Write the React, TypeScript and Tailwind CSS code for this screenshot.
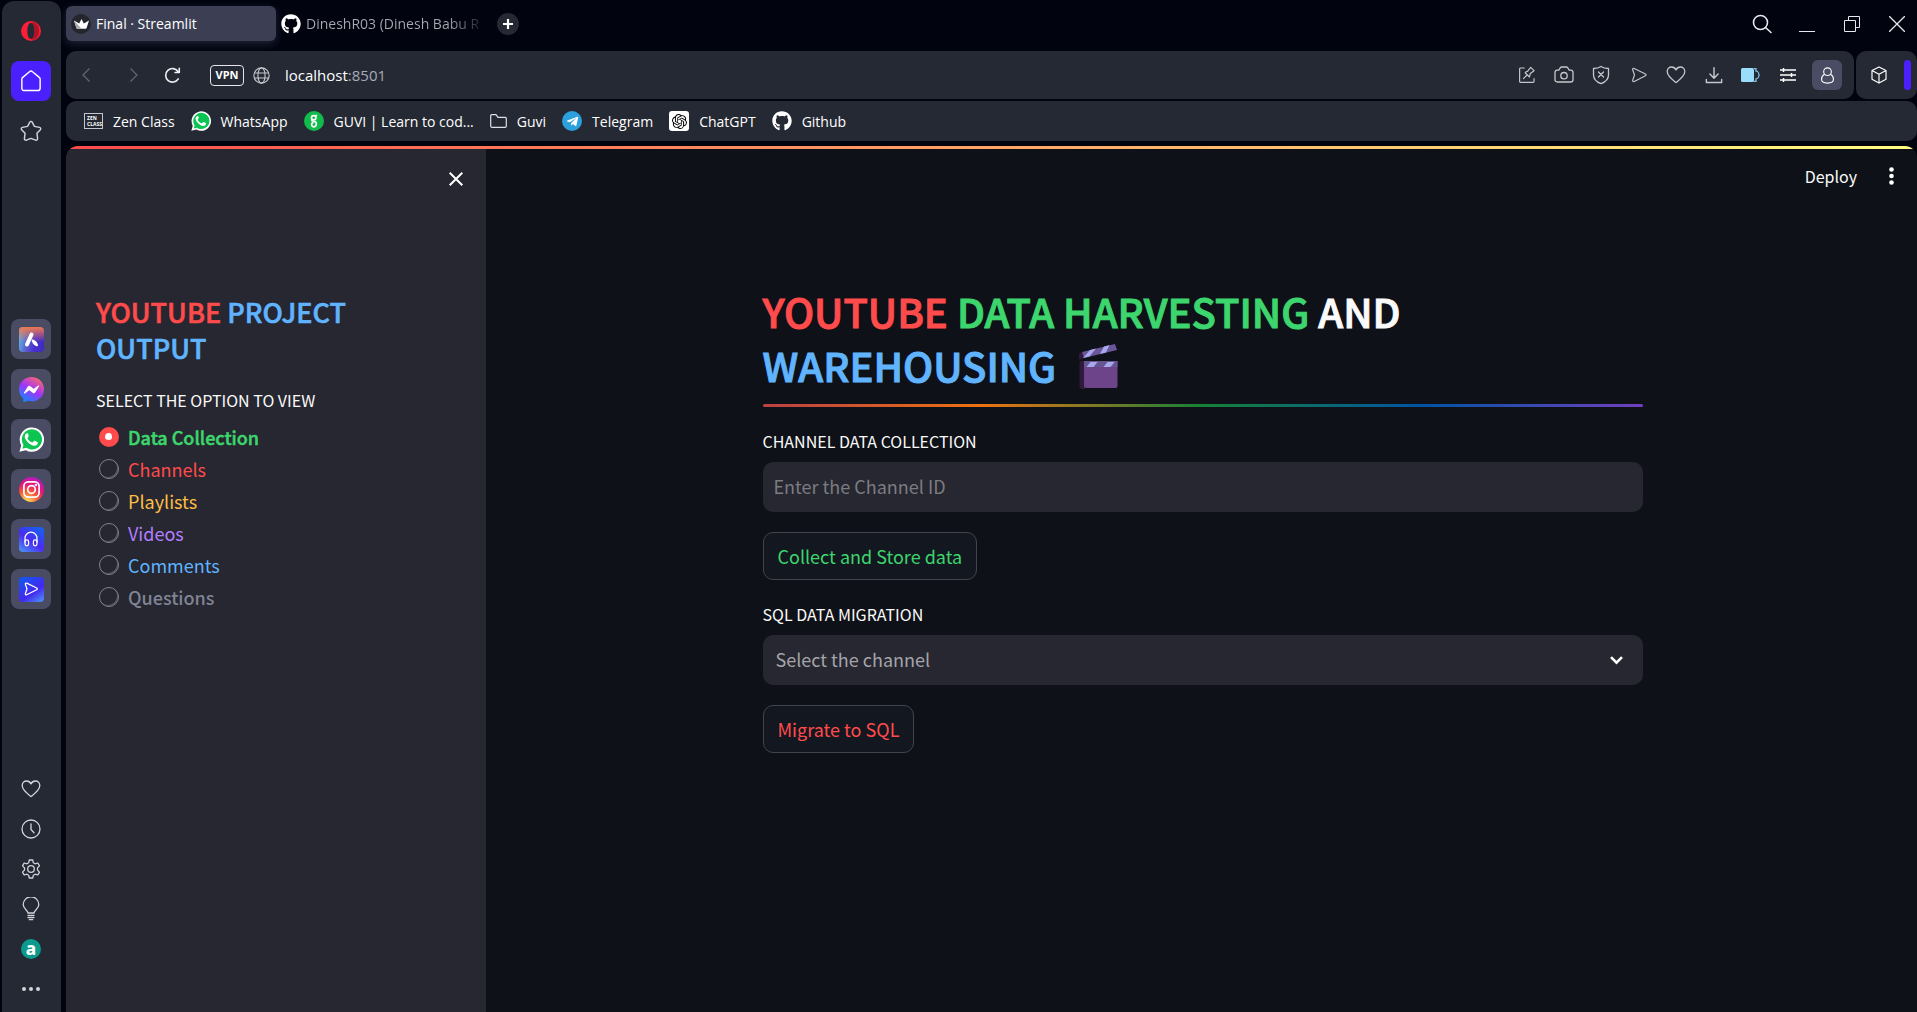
import { useState, type ReactNode } from "react";
import { FaGithub, FaTelegramPlane } from "react-icons/fa";
import { SiOpenai } from "react-icons/si";
import { BsMessenger } from "react-icons/bs";

function Line({ size = 20, width = 1.3, children }: { size?: number; width?: number; children: ReactNode }) {
  return (
    <svg
      width={size}
      height={size}
      viewBox="0 0 20 20"
      fill="none"
      stroke="currentColor"
      strokeWidth={width}
      strokeLinecap="round"
      strokeLinejoin="round"
      aria-hidden="true"
    >
      {children}
    </svg>
  );
}

const heartPath = "M10 17.6C6 14.5 1.2 11 1.2 6.6 1.2 3.8 3.2 2 5.6 2 7.6 2 9.2 3.1 10 4.9 10.8 3.1 12.4 2 14.4 2c2.4 0 4.4 1.8 4.4 4.6 0 4.4-4.8 7.9-8.8 11z";
const sendPath = "M3 4.2c-.4-1.2.6-2 1.7-1.5l12.4 6.1c1 .5 1 1.6 0 2.1L4.7 17.2c-1.1.5-2.1-.3-1.7-1.5L5 10z";

function WhatsAppIcon({ size }: { size: number }) {
  return (
    <svg width={size} height={size} viewBox="0 0 24 24" aria-hidden="true">
      <path fill="#fff" d="M.4 23.8 2.1 17.700A11.700 11.700 0 1 1 6.500 22.200z" />
      <path fill="#0ac552" d="m3.300 20.900 1-3.700A9.700 9.700 0 1 1 7.100 20z" />
      <path
        fill="#fff"
        d="M8.900 6.500c-.3-.6-.5-.6-1-.6-.9 0-2.400 1-2.400 3.200 0 3.600 5.300 8.900 9.100 8.900 2.200 0 3.400-1.300 3.500-2.900 0-.5-.1-.6-.6-.8l-2.300-1.100c-.4-.2-.7-.1-.9.2l-1 1.200c-.2.300-.5.300-.9.100-1.900-.8-3.300-2.100-4.200-3.700-.2-.4-.1-.6.1-.8.300-.4.900-.9.900-1.400z"
      />
    </svg>
  );
}

function Clapper() {
  return (
    <svg className="ml-[23px] inline-block align-[-7px]" width="39" height="45" viewBox="0 0 39 45" role="img" aria-label="Clapper board">
      <path fill="#2f1a3c" d="M0 9.500 3 8l2 6-3 1.500H0z" />
      <path fill="#6a5699" d="M3 8 36 0l2 6L5 14z" />
      <path fill="#a9a8ee" d="M5 14 11.500 12.400 18 4.400 12 5.900zM22 9.900 28 8.400 31.500 1.100 26 2.400z" transform="translate(-1 0)" />
      <path fill="#2f1a3c" d="M1.500 17H6v28H3.500a3 3 0 0 1-3-3V18z" />
      <path fill="#6d448a" d="M5 17h33.500v25a2 2 0 0 1-2 2H7a2 2 0 0 1-2-2z" />
      <path fill="#675592" d="M5 17h33.500v6H5z" />
      <path fill="#a9a8ee" d="M11.500 18h7l-4 5h-7zM28.500 18h7l-4 5h-7z" />
    </svg>
  );
}

function RailButton({ label, children, className = "" }: { label: string; children: ReactNode; className?: string }) {
  return (
    <button aria-label={label} className={`flex size-10 items-center justify-center rounded-lg text-[#d3d4da] ${className}`}>
      {children}
    </button>
  );
}

function Rail() {
  return (
    <nav aria-label="Browser sidebar" className="flex w-[59px] shrink-0 flex-col items-center rounded-t-xl bg-[#252933] pt-[10px] pr-px pb-[3px]">
      <div className="flex flex-col gap-[10px]">
        <RailButton label="Opera menu">
          <svg width="20" height="20" viewBox="0 0 22 22" aria-hidden="true">
            <path fill="#fa1e36" fillRule="evenodd" d="M11 0a11 11 0 1 0 0 22 11 11 0 0 0 0-22zm0 2.200c2.600 0 4 3.800 4 8.800s-1.400 8.800-4 8.800S7 16 7 11s1.400-8.800 4-8.800z" />
            <path fill="#b01326" d="M11 2.200c1.200-1 3.600-1 5.500.6 2.300 2 3.400 5 3.400 8.200s-1.100 6.200-3.400 8.200c-1.900 1.600-4.300 1.600-5.500.6 2.600 0 4-3.800 4-8.800s-1.400-8.800-4-8.800z" />
          </svg>
        </RailButton>
        <RailButton label="Home" className="bg-[#4b20ff] text-white">
          <Line size={22}>
            <path d="M1.700 8.200c0-.6.3-1.100.8-1.500L8.600 1.600c.8-.7 2-.7 2.800 0l6.100 5.100c.5.400.8.900.8 1.500v8.300c0 1.300-.9 2.200-2.200 2.200H3.900c-1.300 0-2.200-.9-2.200-2.200z" />
          </Line>
        </RailButton>
        <RailButton label="Pinboards">
          <Line size={22}>
            <path d="M8.900 1.900c.4-.9 1.700-.9 2.200 0l2 3.900 4.700.9c1 .2 1.400 1.300.7 2.100L15.400 12l.6 5c.1 1-.9 1.700-1.800 1.300L10 16.700l-4.200 1.600c-.9.4-1.900-.3-1.800-1.300l.6-5-3.100-3.200c-.7-.8-.3-1.900.7-2.100l4.700-.9z" />
          </Line>
        </RailButton>
      </div>

      <div className="mt-[168px] flex flex-col gap-[10px]">
        <RailButton label="Aria" className="bg-[#4a4c63]">
          <span className="flex size-[25px] items-center justify-center rounded bg-[linear-gradient(100deg,#5ec4e8,#5a63cf_35%,#4a2fd0_65%,#3d2bbd)]">
            <svg width="25" height="25" viewBox="0 0 25 25" aria-hidden="true">
              <defs>
                <linearGradient id="ariaTop" x1="0" y1="0" x2="0" y2="1">
                  <stop offset="0" stopColor="#f0774e" />
                  <stop offset="0.6" stopColor="#f0774e" stopOpacity="0" />
                </linearGradient>
              </defs>
              <rect width="25" height="25" rx="4" fill="url(#ariaTop)" />
              <path stroke="#fff" strokeWidth="4" strokeLinecap="round" d="M12.500 7.500 8 17.500" />
              <path fill="#fff" d="M12.500 12.500c3.500 0 6 2.500 6.500 5.500.1 1-1 1.600-2 1-2.500-1.200-4.300-3.500-4.500-6.500z" />
            </svg>
          </span>
        </RailButton>
        <RailButton label="Messenger" className="bg-[#4a4c63]">
          <svg width="25" height="25" viewBox="0 0 16 16" aria-hidden="true">
            <defs>
              <linearGradient id="messengerFill" x1="0.8" y1="0" x2="0.2" y2="1">
                <stop offset="0" stopColor="#ff6968" />
                <stop offset="0.5" stopColor="#a334fa" />
                <stop offset="1" stopColor="#0a8cff" />
              </linearGradient>
            </defs>
            <ellipse cx="8" cy="7.800" rx="6" ry="5.500" fill="#fff" />
            <BsMessenger size={16} fill="url(#messengerFill)" />
          </svg>
        </RailButton>
        <RailButton label="WhatsApp" className="bg-[#4a4c63]">
          <WhatsAppIcon size={25} />
        </RailButton>
        <RailButton label="Instagram" className="bg-[#4a4c63]">
          <span className="flex size-[25px] items-center justify-center rounded-full bg-[radial-gradient(circle_at_30%_105%,#fdd05a_10%,#fb5a35_38%,#e6157c_62%,#9a1bf0_100%)] text-white">
            <Line size={19} width={1.800}>
              <rect x="2" y="2" width="16" height="16" rx="4.500" />
              <circle cx="10" cy="10" r="4" />
              <circle cx="14.700" cy="5.300" r="0.500" />
            </Line>
          </span>
        </RailButton>
        <RailButton label="Player" className="bg-[#4a4c63]">
          <span className="flex size-[25px] items-center justify-center rounded bg-[linear-gradient(35deg,#4a9df5,#4b2af0_45%,#0d6bf0)] text-white">
            <Line size={16} width={1.500}>
              <path d="M2.500 14V9a7.500 7.500 0 0 1 15 0v5" />
              <rect x="2.500" y="11" width="4.500" height="7.500" rx="2.200" />
              <rect x="13" y="11" width="4.500" height="7.500" rx="2.200" />
            </Line>
          </span>
        </RailButton>
        <RailButton label="Flow" className="bg-[#4a4c63]">
          <span className="flex size-[25px] items-center justify-center rounded bg-[linear-gradient(145deg,#0d5df0,#4427f0_60%,#4d9bf5)] text-white">
            <Line size={16} width={1.600}>
              <path d={sendPath} />
            </Line>
          </span>
        </RailButton>
      </div>

      <div className="mt-auto flex flex-col">
        <RailButton label="Bookmarks">
          <Line size={20}>
            <path d={heartPath} />
          </Line>
        </RailButton>
        <RailButton label="History">
          <Line size={20}>
            <circle cx="10" cy="10" r="9" />
            <path d="M10 5v5.500l3 3.200" />
          </Line>
        </RailButton>
        <RailButton label="Settings">
          <Line size={20}>
            <circle cx="10" cy="10" r="3.300" />
            <path d="M8.300 1h3.400l.7 2.800 1.700 1 2.700-.8 1.700 2.900-2 2v2.200l2 2-1.700 2.900-2.700-.8-1.700 1-.7 2.800H8.300l-.7-2.800-1.700-1-2.700.8-1.700-2.900 2-2V8.900l-2-2L3.200 4l2.700.8 1.700-1z" />
          </Line>
        </RailButton>
        <RailButton label="Tips">
          <svg width="18" height="24" viewBox="0 0 18 24" fill="none" stroke="currentColor" strokeWidth="1.300" strokeLinecap="round" aria-hidden="true">
            <path d="M6 16c0-2.500-4.800-4-4.800-8.400a7.800 7.800 0 0 1 15.600 0C16.800 12 12 13.500 12 16zM6 18.300h6M6 20.500h6M7.300 22.700h3.400" />
          </svg>
        </RailButton>
        <RailButton label="Amazon Alexa">
          <span className="flex size-5 items-center justify-center rounded-full bg-[#0b9b8e] font-['Noto_Sans'] text-[17px] leading-4 font-extrabold text-white">a</span>
        </RailButton>
        <RailButton label="More">
          <svg width="18" height="4" viewBox="0 0 18 4" fill="currentColor" aria-hidden="true">
            <circle cx="2" cy="2" r="2" />
            <circle cx="9" cy="2" r="2" />
            <circle cx="16" cy="2" r="2" />
          </svg>
        </RailButton>
      </div>
    </nav>
  );
}

function TabStrip() {
  return (
    <div className="flex h-[51px] items-start pt-[6px] text-[#e8e8ee]">
      <button className="flex h-[35px] w-[210px] items-center gap-[5px] rounded-md bg-[#3c3f54] pl-[5px] text-[14px] text-white shadow-[0_3px_8px_rgba(90,94,125,0.35)]">
        <span className="flex size-5 items-center justify-center rounded-full bg-[#24262e]">
          <svg width="15" height="10" viewBox="0 0 15 10" aria-hidden="true">
            <path fill="#fff" d="M7.500 0 9.800 4.500 15 1.500 12.600 9a1 1 0 0 1-1 .7H3.400a1 1 0 0 1-1-.7L0 1.500l5.200 3z" />
            <path fill="#a8a9ae" d="m0 1.500 7.500 8.200H3.400a1 1 0 0 1-1-.7z" />
          </svg>
        </span>
        Final · Streamlit
      </button>
      <button className="ml-[5px] flex h-[35px] w-[200px] items-center gap-[5px] text-[14px] whitespace-nowrap">
        <FaGithub size={20} className="shrink-0 text-white" />
        <span className="bg-[linear-gradient(90deg,#a9a9b0_82%,transparent_105%)] bg-clip-text text-transparent">DineshR03 (Dinesh Babu R</span>
      </button>
      <button aria-label="New tab" className="mt-[7px] ml-4 flex size-[22px] items-center justify-center rounded-full bg-[#252933] text-white">
        <svg width="10" height="10" viewBox="0 0 10 10" stroke="currentColor" strokeWidth="2.200" aria-hidden="true">
          <path d="M5 0v10M0 5h10" />
        </svg>
      </button>
      <div className="mt-[2px] ml-auto flex gap-[5px]">
        <button aria-label="Search tabs" className="flex h-8 w-10 items-center justify-center">
          <Line width={1.600}>
            <circle cx="8.500" cy="8.500" r="7" />
            <path d="m13.500 13.500 5.500 5" />
          </Line>
        </button>
        <button aria-label="Minimize" className="flex h-8 w-10 items-center justify-center">
          <svg width="16" height="16" viewBox="0 0 16 16" stroke="currentColor" aria-hidden="true">
            <path d="M0 15.500h16" />
          </svg>
        </button>
        <button aria-label="Restore" className="flex h-8 w-10 items-center justify-center">
          <svg width="16" height="16" viewBox="0 0 16 16" fill="none" stroke="currentColor" aria-hidden="true">
            <path d="M.5 4.500h11v11H.5zM4.500 4V.5h11v11h-4" />
          </svg>
        </button>
        <button aria-label="Close window" className="flex h-8 w-10 items-center justify-center">
          <svg width="16" height="16" viewBox="0 0 16 16" stroke="currentColor" strokeWidth="1.300" aria-hidden="true">
            <path d="m0 0 16 16M16 0 0 16" />
          </svg>
        </button>
      </div>
    </div>
  );
}

const toolIcons: { label: string; icon: ReactNode }[] = [
  {
    label: "Pin to board",
    icon: (
      <Line size={18}>
        <path d="M7 2.200H2.800a1 1 0 0 0-1 1v14a1 1 0 0 0 1 1h14a1 1 0 0 0 1-1V14M6 14l4-4M8 7.500l4.700 4.700M12.500 12c1.200-1.300.8-2.200.9-3.300l4.400-3.500-3.700-3.700-3.500 4.400C9.500 6 8.500 6.500 8 7.500" />
      </Line>
    ),
  },
  {
    label: "Snapshot",
    icon: (
      <Line>
        <path d="M1 7.500c0-1.400 1-2.300 2.300-2.300h1.500l1.600-2.600c.3-.4.700-.6 1.200-.6h4.800c.5 0 .9.200 1.200.6l1.600 2.600h1.500c1.300 0 2.300.9 2.300 2.300v7.200c0 1.400-1 2.300-2.300 2.300H3.300C2 17 1 16.100 1 14.700z" />
        <circle cx="10" cy="10.700" r="3.200" />
      </Line>
    ),
  },
  {
    label: "Ad blocker",
    icon: (
      <Line>
        <path d="M10 1.500c2.300 1.600 4.800 2 7.500 2v6.500c0 4.200-3.200 7-7.500 8.700-4.300-1.700-7.500-4.500-7.500-8.700V3.500c2.700 0 5.200-.4 7.500-2zM7.500 7l5 5M12.500 7l-5 5" />
      </Line>
    ),
  },
  { label: "My Flow", icon: <Line size={18}><path d={sendPath} /></Line> },
  { label: "Add bookmark", icon: <Line><path d={heartPath} /></Line> },
  {
    label: "Downloads",
    icon: (
      <Line size={18} width={1.600}>
        <path d="M10 2v11M5.500 9l4.500 4.500L14.500 9M1.500 15v3.300h17V15" />
      </Line>
    ),
  },
  {
    label: "Battery saver",
    icon: (
      <svg width="19" height="14" viewBox="0 0 19 14" aria-hidden="true">
        <rect width="13" height="14" rx="1.500" fill="#9adcfb" />
        <path fill="none" stroke="#7fc4e4" strokeWidth="1.300" d="M13 .7h2v2.500c1.500 0 3 1.800 3 3.800s-1.500 3.800-3 3.800v2.500h-2" />
      </svg>
    ),
  },
  {
    label: "Easy setup",
    icon: (
      <svg width="16" height="14" viewBox="0 0 16 14" stroke="#fff" strokeWidth="1.500" aria-hidden="true">
        <path d="M0 2h16M0 7h16M0 12h16M3.500 0v4M11.500 5v4M3.500 10v4" />
      </svg>
    ),
  },
];

function Toolbar() {
  return (
    <div className="flex gap-[2px]">
      <div className="flex h-12 min-w-0 flex-1 items-center rounded-[10px] bg-[#252933] pr-3">
        <button aria-label="Back" className="flex h-8 w-[40px] items-center justify-center text-[#62656f]">
          <svg width="8" height="14" viewBox="0 0 8 14" fill="none" stroke="currentColor" strokeWidth="1.300" aria-hidden="true"><path d="M7.500.5 1 7l6.500 6.500" /></svg>
        </button>
        <button aria-label="Forward" className="ml-[8px] flex h-8 w-[40px] items-center justify-center text-[#62656f]">
          <svg width="8" height="14" viewBox="0 0 8 14" fill="none" stroke="currentColor" strokeWidth="1.300" aria-hidden="true"><path d="M.5.500 7 7 .5 13.500" /></svg>
        </button>
        <button aria-label="Reload" className="flex h-8 w-[36px] items-center justify-center text-[#eeeef2]">
          <Line size={17} width={1.900}>
            <path d="M16.800 14A8 8 0 1 1 16.500 5.200M18 1.500v5h-5" />
          </Line>
        </button>
        <button className="ml-5 flex h-[21px] w-[34px] items-center justify-center rounded border border-[#e6e6ea] font-['Noto_Sans'] text-[11px] leading-4 font-bold text-white">VPN</button>
        <button aria-label="Site information" className="ml-[9px] text-[#c6c7cd]">
          <Line size={17}>
            <circle cx="10" cy="10" r="9" />
            <ellipse cx="10" cy="10" rx="4.200" ry="9" />
            <path d="M1.800 7h16.400M1.800 13h16.400" />
          </Line>
        </button>
        <a href="http://localhost:8501" className="ml-[15px] text-[15px] text-[#a5abb8]">
          <span className="text-white">localhost</span>:8501
        </a>
        <div className="ml-auto grid w-[299px] grid-cols-8 text-[#c6c7cd]">
          {toolIcons.map((t) => (
            <button key={t.label} aria-label={t.label} className="flex h-8 items-center justify-center">
              {t.icon}
            </button>
          ))}
        </div>
        <button aria-label="Profile" className="ml-[5px] flex size-[30px] items-center justify-center rounded-md bg-[#4a4c63] text-white">
          <Line size={17}>
            <circle cx="10" cy="5.500" r="4.500" />
            <path d="M6.500 8.500C4 9.700 3 12.200 3 14.500 3 17.500 5.500 19 10 19s7-1.500 7-4.500c0-2.300-1-4.800-3.500-6" />
          </Line>
        </button>
      </div>
      <div className="flex h-12 w-[61px] items-center justify-end rounded-[10px] bg-[#252933] pr-[6px] text-white">
        <button aria-label="Extensions">
          <Line size={18}>
            <path d="M10 1 17.800 5v9.800L10 19l-7.800-4.200V5zM2.200 5 10 9.200 17.800 5M10 9.200V19" />
          </Line>
        </button>
        <span className="ml-4 h-[30px] w-[7px] rounded-full bg-[#4b20ff]" />
      </div>
    </div>
  );
}

const bookmarks: { label: string; icon: ReactNode }[] = [
  {
    label: "Zen Class",
    icon: (
      <span className="flex h-4 w-[19px] flex-col justify-center border border-[#c6c7cd] pl-[2px] font-['Noto_Sans'] text-[5px] leading-[6px] font-bold text-white">
        <span>ZEN</span>
        <span>CLASS</span>
      </span>
    ),
  },
  { label: "WhatsApp", icon: <WhatsAppIcon size={20} /> },
  {
    label: "GUVI | Learn to cod...",
    icon: (
      <svg width="20" height="20" viewBox="0 0 20 20" fill="none" stroke="#fff" strokeWidth="1.700" aria-hidden="true">
        <circle cx="10" cy="10" r="10" fill="#11bc4c" stroke="none" />
        <circle cx="9.700" cy="6.800" r="2.200" />
        <path d="M11.500 4.900 13 4.200M8 8.500c-.8 1 .2 1.700 1.600 1.800 2 .1 2.900 1.200 2.700 2.900-.2 1.600-1.200 2.600-2.600 2.600S7.400 14.700 7.700 13c.1-.8.900-1.400 1.700-1.400" />
      </svg>
    ),
  },
  {
    label: "Guvi",
    icon: (
      <svg width="17" height="14" viewBox="0 0 17 14" fill="none" stroke="#e0e0e5" strokeWidth="1.200" strokeLinejoin="round" aria-hidden="true">
        <path d="M.7 12V1.700c0-.6.400-1 1-1H6l2 2.600h7.300c.6 0 1 .4 1 1V12c0 .8-.5 1.300-1.300 1.300H2C1.200 13.300.7 12.800.7 12z" />
      </svg>
    ),
  },
  {
    label: "Telegram",
    icon: (
      <span className="flex size-5 items-center justify-center rounded-full bg-[#2ba0dc] text-white">
        <FaTelegramPlane size={13} />
      </span>
    ),
  },
  {
    label: "ChatGPT",
    icon: (
      <span className="flex size-5 items-center justify-center rounded-[3px] bg-white text-black">
        <SiOpenai size={15} />
      </span>
    ),
  },
  { label: "Github", icon: <FaGithub size={20} className="text-white" /> },
];

function BookmarksBar() {
  return (
    <nav aria-label="Bookmarks" className="mt-[2px] flex h-10 items-center gap-4 rounded-[10px] bg-[#252933] pl-[18px] text-[14px] text-white">
      {bookmarks.map((b) => (
        <a key={b.label} href="#" className="flex items-center gap-[10px] whitespace-nowrap">
          {b.icon}
          {b.label}
        </a>
      ))}
    </nav>
  );
}

const options = [
  { label: "Data Collection", className: "text-[#3dd56d] font-medium [-webkit-text-stroke:0.5px]" },
  { label: "Channels", className: "text-[#ff4b4b]" },
  { label: "Playlists", className: "text-[#ffbd45]" },
  { label: "Videos", className: "text-[#b27eff]" },
  { label: "Comments", className: "text-[#60b4ff]" },
  { label: "Questions", className: "text-[#808495] font-medium" },
];

function ProjectSidebar() {
  const [selected, setSelected] = useState("Data Collection");
  return (
    <aside className="w-[420px] shrink-0 bg-[#262730] px-[30px] text-[#fafafa]">
      <div className="flex h-[60px] items-center justify-end">
        <button aria-label="Close sidebar" className="-mr-[7px] flex size-[14px]">
          <svg width="14" height="14" viewBox="0 0 14 14" stroke="#fff" strokeWidth="2" aria-hidden="true">
            <path d="m.7.700 12.600 12.600M13.300.7.700 13.300" />
          </svg>
        </button>
      </div>
      <h2 className="mt-[85px] text-[27px] leading-9 font-medium text-[#60b4ff] [-webkit-text-stroke:0.6px]">
        <span className="text-[#ff4b4b]">YOUTUBE</span> PROJECT OUTPUT
      </h2>
      <fieldset className="mt-[22px]">
        <legend className="text-[16px] leading-6">SELECT THE OPTION TO VIEW</legend>
        <div className="mt-[9px] pl-[3px]">
          {options.map((o) => (
            <label key={o.label} className="flex h-8 items-center gap-[9px]">
              <input
                type="radio"
                name="view"
                checked={selected === o.label}
                onChange={() => setSelected(o.label)}
                className="size-5 appearance-none rounded-full border border-[#83838a] shadow-[inset_-1px_-1px_0_#83838a80] checked:border-t-[6px] checked:border-r-[7px] checked:border-b-[7px] checked:border-l-[6px] checked:border-[#ff4b4b] checked:bg-white checked:shadow-none"
              />
              <span className={`text-[18px] leading-7 ${o.className}`}>{o.label}</span>
            </label>
          ))}
        </div>
      </fieldset>
    </aside>
  );
}

function MainPanel() {
  return (
    <main className="min-w-0 flex-1 bg-[#0e1117] text-[#fafafa]">
      <header className="flex h-[54px] items-center justify-end gap-8 pr-[23px]">
        <button className="text-[16px] leading-6">Deploy</button>
        <button aria-label="Main menu">
          <svg width="5" height="18" viewBox="0 0 5 18" fill="#fff" aria-hidden="true">
            <circle cx="2.500" cy="2.500" r="2.300" />
            <circle cx="2.500" cy="9" r="2.300" />
            <circle cx="2.500" cy="15.500" r="2.300" />
          </svg>
        </button>
      </header>
      <div className="pr-5 pl-[22px]">
        <div className="mx-auto max-w-[880px] pt-[81px]">
          <h1 className="text-[40px] leading-[54px] font-medium [-webkit-text-stroke:1px]">
            <span className="text-[#ff4b4b]">YOUTUBE</span> <span className="text-[#3dd56d]">DATA HARVESTING</span> AND{" "}
            <span className="text-[#60b4ff]">WAREHOUSING</span>
            <Clapper />
          </h1>
          <hr className="mt-3 h-[3px] rounded-full border-0 bg-[linear-gradient(90deg,#bd4043,#ec7211_25%,#158237_50%,#0054a3_75%,#723fbf)]" />
          <label htmlFor="channel-id" className="mt-[22px] block text-[16px] leading-6">CHANNEL DATA COLLECTION</label>
          <input
            id="channel-id"
            type="text"
            placeholder="Enter the Channel ID"
            className="mt-[9px] block h-[50px] w-full rounded-[10px] bg-[#262730] px-[11px] pb-[2px] text-[18px] placeholder:text-[#7c7c81]"
          />
          <button className="mt-5 block h-12 rounded-[10px] border border-[#41444c] bg-[#131720] px-[14px] pb-px text-[18px] leading-7 text-[#3dd56d]">
            Collect and Store data
          </button>
          <label htmlFor="channel-select" className="mt-[22px] block text-[16px] leading-6">SQL DATA MIGRATION</label>
          <div className="relative mt-[9px]">
            <select id="channel-select" className="block h-[50px] w-full appearance-none rounded-[10px] bg-[#262730] px-[13px] pb-[2px] text-[18px] text-[#a4a4a9]">
              <option>Select the channel</option>
            </select>
            <svg className="pointer-events-none absolute top-[21px] right-5" width="13" height="9" viewBox="0 0 13 9" fill="none" stroke="#fff" strokeWidth="2.600" aria-hidden="true">
              <path d="m1 1.200 5.500 5.500L12 1.200" />
            </svg>
          </div>
          <button className="mt-5 block h-12 rounded-[10px] border border-[#41444c] bg-[#131720] px-[14px] pb-px text-[18px] leading-7 text-[#ff4b4b]">
            Migrate to SQL
          </button>
        </div>
      </div>
    </main>
  );
}

export default function App() {
  return (
    <div className="flex min-h-screen bg-[#01040f] pl-[2px] pt-px font-['Open_Sans','Noto_Sans',sans-serif]">
      <Rail />
      <div className="-mt-px ml-[5px] flex min-w-0 flex-1 flex-col">
        <TabStrip />
        <Toolbar />
        <BookmarksBar />
        <div className="mt-[5px] flex flex-1 flex-col overflow-hidden rounded-t-xl font-['Noto_Sans_CJK_SC',sans-serif]">
          <div className="h-[3px] bg-[linear-gradient(90deg,#ff4b4b,#fffd80)]" />
          <div className="flex flex-1">
            <ProjectSidebar />
            <MainPanel />
          </div>
        </div>
      </div>
    </div>
  );
}
